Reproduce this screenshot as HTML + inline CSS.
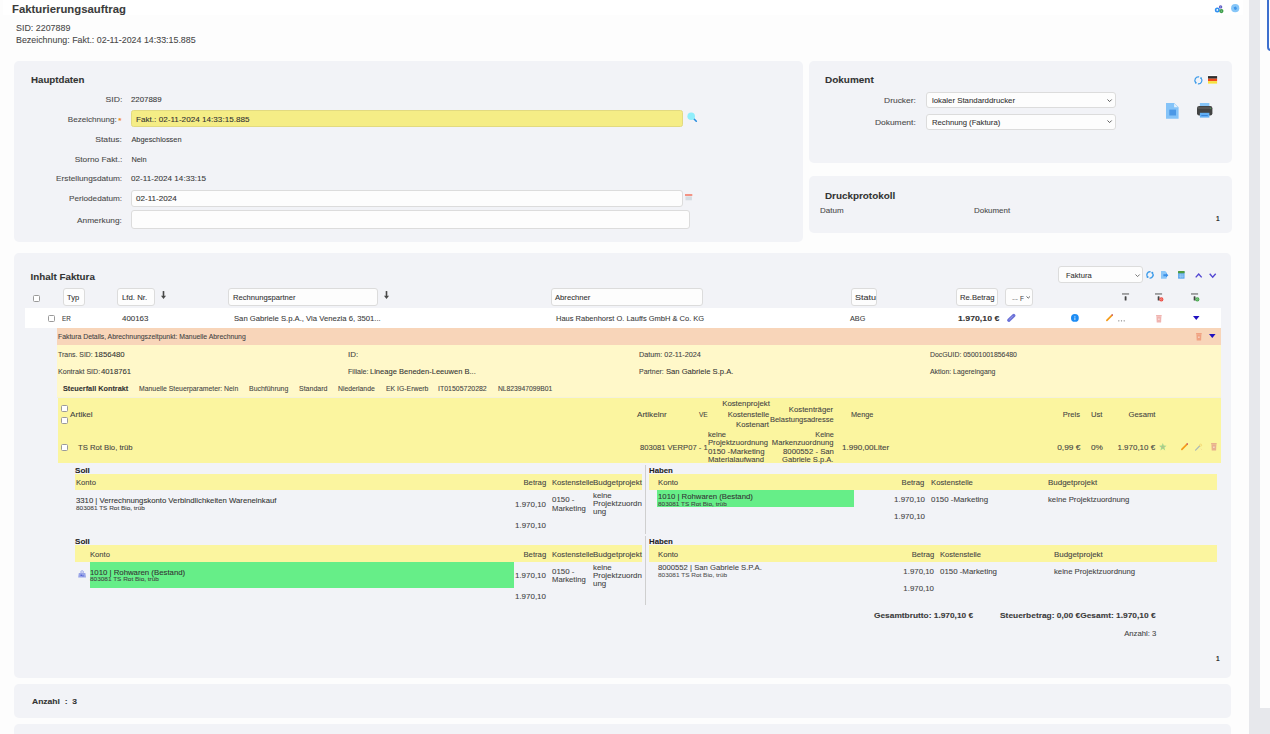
<!DOCTYPE html>
<html><head><meta charset="utf-8"><title>Fakturierungsauftrag</title>
<style>
html,body{margin:0;padding:0;}
body{width:1270px;height:734px;overflow:hidden;position:relative;background:#fdfdfd;font-family:"Liberation Sans",sans-serif;}
body>div,body>span,body>svg{position:absolute;}
span{white-space:pre;-webkit-text-stroke:0.08px currentColor;}
svg{overflow:visible}
</style></head><body>
<div style="left:3px;top:0px;width:1240px;height:15px;background:#fff"></div>
<div style="left:1249px;top:0px;width:11px;height:734px;background:#e7e8ec"></div>
<div style="left:1260px;top:0px;width:10px;height:708px;background:#fdfdfd"></div>
<div style="left:1260px;top:708px;width:10px;height:26px;background:#e7e8ec"></div>
<div style="left:1266.6px;top:-10px;width:30px;height:61px;border:2.2px solid #3d6fce;border-radius:4px;box-sizing:border-box"></div>
<div style="left:14.3px;top:60.8px;width:788.7px;height:180.9px;background:#f2f3f7;border-radius:5px"></div>
<div style="left:808.5px;top:60.6px;width:423.2px;height:102.3px;background:#f2f3f7;border-radius:5px"></div>
<div style="left:808.5px;top:176px;width:423.2px;height:57px;background:#f2f3f7;border-radius:5px"></div>
<div style="left:14.3px;top:253.1px;width:1217.2px;height:425.1px;background:#f2f3f7;border-radius:5px"></div>
<div style="left:14.3px;top:684.2px;width:1217.2px;height:34.1px;background:#f2f3f7;border-radius:5px"></div>
<div style="left:14.3px;top:723.8px;width:1217.2px;height:36.2px;background:#f2f3f7;border-radius:5px"></div>
<div style="left:131.2px;top:110.4px;width:551.4px;height:16.5px;background:#f5ed86;border:1px solid #e2da80;border-radius:2.5px;box-sizing:border-box"></div>
<div style="left:131.2px;top:189.5px;width:551.4px;height:17.1px;background:#fdfdfd;border:1px solid #dcdcdc;border-radius:3px;box-sizing:border-box"></div>
<div style="left:131.2px;top:210.3px;width:559.2px;height:18.3px;background:#fdfdfd;border:1px solid #dcdcdc;border-radius:3px;box-sizing:border-box"></div>
<div style="left:925.5px;top:91.5px;width:190.3px;height:16.9px;background:#fdfdfd;border:1px solid #dcdcdc;border-radius:3px;box-sizing:border-box"></div>
<div style="left:925.5px;top:113.6px;width:190.3px;height:16.2px;background:#fdfdfd;border:1px solid #dcdcdc;border-radius:3px;box-sizing:border-box"></div>
<div style="left:62.7px;top:288.4px;width:22.2px;height:17.3px;background:#fdfdfd;border:1px solid #dcdcdc;border-radius:3px;box-sizing:border-box"></div>
<div style="left:116.9px;top:288.4px;width:37.9px;height:17.3px;background:#fdfdfd;border:1px solid #dcdcdc;border-radius:3px;box-sizing:border-box"></div>
<div style="left:228.3px;top:288.4px;width:149.9px;height:17.3px;background:#fdfdfd;border:1px solid #dcdcdc;border-radius:3px;box-sizing:border-box"></div>
<div style="left:550.5px;top:288.4px;width:152.3px;height:17.3px;background:#fdfdfd;border:1px solid #dcdcdc;border-radius:3px;box-sizing:border-box"></div>
<div style="left:850.5px;top:288.4px;width:26.2px;height:17.3px;background:#fdfdfd;border:1px solid #dcdcdc;border-radius:3px;box-sizing:border-box"></div>
<div style="left:955.7px;top:288.4px;width:42.0px;height:17.3px;background:#fdfdfd;border:1px solid #dcdcdc;border-radius:3px;box-sizing:border-box"></div>
<div style="left:1004.6px;top:288.4px;width:28.0px;height:17.3px;background:#fdfdfd;border:1px solid #dcdcdc;border-radius:3px;box-sizing:border-box"></div>
<div style="left:1058.4px;top:266.2px;width:85.1px;height:17.3px;background:#fdfdfd;border:1px solid #dcdcdc;border-radius:3px;box-sizing:border-box"></div>
<div style="left:25.2px;top:307.9px;width:1195.9px;height:20.0px;background:#ffffff"></div>
<div style="left:57px;top:328.1px;width:1164.1px;height:16.8px;background:#f8d5b9"></div>
<div style="left:57px;top:344.9px;width:1164.1px;height:53.1px;background:#fff8c9"></div>
<div style="left:57px;top:396.9px;width:1164.1px;height:1.0px;background:#f4f1dc"></div>
<div style="left:57.5px;top:398px;width:1163.6px;height:65.4px;background:#fbf59f"></div>
<div style="left:75.1px;top:473.6px;width:567.4px;height:16.6px;background:#fbf59f"></div>
<div style="left:648.8px;top:473.6px;width:567.9px;height:16.6px;background:#fbf59f"></div>
<div style="left:644.5px;top:464.7px;width:1.0px;height:69.0px;background:#cfcfcf"></div>
<div style="left:75.1px;top:545.1px;width:567.4px;height:16.7px;background:#fbf59f"></div>
<div style="left:648.8px;top:545.1px;width:567.9px;height:16.7px;background:#fbf59f"></div>
<div style="left:644.5px;top:536.3px;width:1.0px;height:69.0px;background:#cfcfcf"></div>
<div style="left:657.4px;top:490.3px;width:196.5px;height:17.2px;background:#66ee88"></div>
<div style="left:89.9px;top:562.2px;width:424.4px;height:25.6px;background:#66ee88"></div>
<div style="left:33px;top:294.5px;width:7.3px;height:7.5px;background:#fff;border:1px solid #9a9a9a;border-radius:1.5px;box-sizing:border-box"></div>
<div style="left:48px;top:315.3px;width:7.2px;height:7.2px;background:#fff;border:1px solid #9a9a9a;border-radius:1.5px;box-sizing:border-box"></div>
<div style="left:60.6px;top:405.3px;width:7.0px;height:6.6px;background:#fff;border:1px solid #9a9a9a;border-radius:1.5px;box-sizing:border-box"></div>
<div style="left:60.6px;top:417.1px;width:7.0px;height:6.7px;background:#fff;border:1px solid #9a9a9a;border-radius:1.5px;box-sizing:border-box"></div>
<div style="left:60.6px;top:444.3px;width:7.0px;height:6.3px;background:#fff;border:1px solid #9a9a9a;border-radius:1.5px;box-sizing:border-box"></div>
<span style="left:118.3px;top:116.9px;font-size:8px;line-height:8px;color:#f08a24;font-weight:700">*</span>
<svg style="left:1107.2px;top:98.5px" width="5.2" height="3.1" viewBox="0 0 5.2 3.1"><path d="M0.5 0.5 L2.6 2.6 L4.7 0.5" fill="none" stroke="#555" stroke-width="0.95"/></svg>
<svg style="left:1107.2px;top:120.1px" width="5.2" height="3.1" viewBox="0 0 5.2 3.1"><path d="M0.5 0.5 L2.6 2.6 L4.7 0.5" fill="none" stroke="#555" stroke-width="0.95"/></svg>
<svg style="left:1135.2px;top:273.6px" width="5.2" height="3.1" viewBox="0 0 5.2 3.1"><path d="M0.5 0.5 L2.6 2.6 L4.7 0.5" fill="none" stroke="#666" stroke-width="0.9"/></svg>
<svg style="left:1025.8px;top:296.2px" width="4.5" height="2.6" viewBox="0 0 4.5 2.6"><path d="M0.5 0.5 L2.25 2.1 L4.0 0.5" fill="none" stroke="#666" stroke-width="1.0"/></svg>
<svg style="left:1214px;top:3.5px" width="11" height="10" viewBox="0 0 11 10"><circle cx="3.3" cy="5.9" r="2.5" fill="#2f90f2"/><circle cx="3.3" cy="5.9" r="0.9" fill="#fff"/><circle cx="6.6" cy="2.9" r="1.7" fill="#5c5cc4"/><circle cx="6.6" cy="2.9" r="0.6" fill="#a9a9e6"/><circle cx="7.4" cy="7.1" r="2.1" fill="#3d9d4a"/><circle cx="7.4" cy="7.1" r="0.7" fill="#8fd39a"/></svg>
<svg style="left:1231.4px;top:3.8px" width="8.5" height="8.5" viewBox="0 0 8.5 8.5"><circle cx="4.2" cy="4.2" r="4.1" fill="#86c6f8"/><path d="M2.6 3.2 L4.8 2.6 L6 4.2 L5 6 L3.4 5.6 Z" fill="#3f96ea"/></svg>
<svg style="left:686.8px;top:111.9px" width="10.5" height="10.5" viewBox="0 0 10.5 10.5"><path d="M6.3 6.2 L9.3 9.2" stroke="#2a8ee0" stroke-width="1.6" stroke-linecap="round"/><circle cx="4.2" cy="4.2" r="3.8" fill="#90eefb"/></svg>
<svg style="left:684.8px;top:194.4px" width="7.3" height="6.5" viewBox="0 0 7.3 6.5"><rect x="0" y="0" width="7.3" height="2" fill="#f39384"/><rect x="0.5" y="2.4" width="6.4" height="3.9" fill="#d5dce2"/></svg>
<svg style="left:1194px;top:75.6px" width="8.8" height="8.8" viewBox="0 0 8.8 8.8"><path d="M5.13 0.96 A3.52 3.52 0 0 0 1.78 6.76" fill="none" stroke="#3d9be9" stroke-width="1.2"/><path d="M7.02 2.04 A3.52 3.52 0 0 1 3.91 7.89" fill="none" stroke="#3d9be9" stroke-width="1.2"/><circle cx="7.02" cy="2.04" r="0.90" fill="#3d9be9"/><circle cx="1.78" cy="6.76" r="0.90" fill="#3d9be9"/></svg>
<svg style="left:1207.9px;top:75.2px" width="9.1" height="8.8" viewBox="0 0 9.1 8.8"><rect width="9.1" height="0.8" y="0" fill="#ffffff"/><rect width="9.1" height="2.6" y="1.1" fill="#2e2e2e"/><rect width="9.1" height="2.5" y="3.7" fill="#f24a1c"/><rect width="9.1" height="2.4" y="6.2" fill="#f7e23a"/></svg>
<svg style="left:1166.1px;top:102.5px" width="12.6" height="15.8" viewBox="0 0 12.6 15.8"><path d="M0 0 H8.1 L12.6 4.2 V15.8 H0 Z" fill="#85c3f8"/><path d="M8.1 0.6 V4.2 H11.9 Z" fill="#e3f1fd"/><rect x="3.3" y="6.6" width="6.7" height="5.9" fill="#4c98e6"/></svg>
<svg style="left:1197px;top:103.3px" width="15.4" height="14.6" viewBox="0 0 15.4 14.6"><rect x="2.9" y="0" width="9.5" height="3.8" fill="#86c4f8"/><rect x="0" y="3" width="15.4" height="9.5" rx="2.2" fill="#434343"/><rect x="0.8" y="4.2" width="13.8" height="1.6" fill="#5a5a5a"/><circle cx="13.5" cy="5.5" r="0.6" fill="#3fa34a"/><rect x="2.9" y="9.8" width="9.5" height="4.8" fill="#62aff4"/><rect x="4.3" y="12" width="6.5" height="1" fill="#3c84d8"/></svg>
<svg style="left:1146.3px;top:271px" width="7.9" height="7.9" viewBox="0 0 7.9 7.9"><path d="M4.61 0.86 A3.16 3.16 0 0 0 1.60 6.06" fill="none" stroke="#3d9be9" stroke-width="1.35"/><path d="M6.30 1.84 A3.16 3.16 0 0 1 3.51 7.08" fill="none" stroke="#3d9be9" stroke-width="1.35"/><circle cx="6.30" cy="1.84" r="1.01" fill="#3d9be9"/><circle cx="1.60" cy="6.06" r="1.01" fill="#3d9be9"/></svg>
<svg style="left:1161.4px;top:271.1px" width="7.4" height="7.8" viewBox="0 0 7.4 7.8"><path d="M0 0 H4.2 L5.6 1.4 V7.8 H0 Z" fill="#8ac6f8"/><path d="M2.4 3.3 H5 V2 L7.4 4.3 L5 6.6 V5.3 H2.4 Z" fill="#3a8fe8"/></svg>
<svg style="left:1178.1px;top:271.1px" width="6.6" height="7.8" viewBox="0 0 6.6 7.8"><rect width="6.6" height="7.8" rx="0.9" fill="#66acee"/><rect x="0" y="0" width="6.6" height="2.3" rx="0.6" fill="#4f9b3e"/><path d="M0.8 4 H5.8 M0.8 5.6 H5.8 M2.5 2.8 V7.2 M4.1 2.8 V7.2" stroke="#a8d2f6" stroke-width="0.5"/></svg>
<svg style="left:1194.8px;top:272.6px" width="7.4" height="5" viewBox="0 0 7.4 5"><path d="M0.7 4.4 L3.7 1 L6.7 4.4" fill="none" stroke="#5448d2" stroke-width="1.4"/></svg>
<svg style="left:1208.9px;top:272.6px" width="7.4" height="5" viewBox="0 0 7.4 5"><path d="M0.7 0.8 L3.7 4.1 L6.7 0.8" fill="none" stroke="#5448d2" stroke-width="1.4"/></svg>
<svg style="left:1122.1px;top:293px" width="8.6" height="8.8" viewBox="0 0 8.6 8.8"><rect x="0" y="0.3" width="7.1" height="1.3" fill="#7a7a7a"/><rect x="2.7" y="3.2" width="1.8" height="4.3" rx="0.5" fill="#444"/></svg>
<svg style="left:1155.4px;top:293px" width="8.6" height="8.8" viewBox="0 0 8.6 8.8"><rect x="0" y="0.3" width="7.1" height="1.3" fill="#7a7a7a"/><rect x="2.7" y="3.2" width="1.8" height="4.3" rx="0.5" fill="#444"/><circle cx="6.3" cy="6.4" r="2.1" fill="#ec4a40"/><circle cx="6.3" cy="6.4" r="0.8" fill="none" stroke="#fff" stroke-width="0.5" opacity="0.6"/></svg>
<svg style="left:1190.5px;top:293px" width="8.6" height="8.8" viewBox="0 0 8.6 8.8"><rect x="0" y="0.3" width="7.1" height="1.3" fill="#7a7a7a"/><rect x="2.7" y="3.2" width="1.8" height="4.3" rx="0.5" fill="#444"/><circle cx="6.3" cy="6.4" r="2.1" fill="#45a84c"/><circle cx="6.3" cy="6.4" r="0.8" fill="none" stroke="#fff" stroke-width="0.5" opacity="0.6"/></svg>
<svg style="left:160.9px;top:290.8px" width="5" height="8" viewBox="0 0 5 8"><rect x="1.7" y="0" width="1.6" height="5.2" rx="0.6" fill="#484848"/><path d="M0 4.8 H5 L2.5 8 Z" fill="#484848"/></svg>
<svg style="left:384.3px;top:290.8px" width="5" height="8" viewBox="0 0 5 8"><rect x="1.7" y="0" width="1.6" height="5.2" rx="0.6" fill="#484848"/><path d="M0 4.8 H5 L2.5 8 Z" fill="#484848"/></svg>
<svg style="left:1007.4px;top:313.8px" width="8.6" height="8" viewBox="0 0 8.6 8"><path d="M1.8 6.2 L6.8 1.6" stroke="#6c72d8" stroke-width="3.4" stroke-linecap="round"/><path d="M2.6 5.2 L5.6 2.4" stroke="#a6aaea" stroke-width="0.7" stroke-linecap="round"/></svg>
<svg style="left:1071.3px;top:314px" width="7.8" height="7.8" viewBox="0 0 7.8 7.8"><circle cx="3.9" cy="3.9" r="3.9" fill="#1c8cf4"/><rect x="3.45" y="3.4" width="0.9" height="2.7" fill="#d9ecff"/><rect x="3.45" y="1.9" width="0.9" height="0.9" fill="#d9ecff"/></svg>
<svg style="left:1106.2px;top:314.3px" width="7.2" height="7.2" viewBox="0 0 7.2 7.2"><path d="M0.9 6.3 L6.1 1.1" stroke="#f59b18" stroke-width="1.7" stroke-linecap="round"/><circle cx="6.3" cy="0.9" r="0.75" fill="#b84a8a"/></svg>
<svg style="left:1117.8px;top:319.8px" width="7" height="1.6" viewBox="0 0 7 1.6"><circle cx="0.8" cy="0.8" r="0.65" fill="#777"/><circle cx="3.5" cy="0.8" r="0.65" fill="#777"/><circle cx="6.2" cy="0.8" r="0.65" fill="#777"/></svg>
<svg style="left:1156.2px;top:314.5px" width="5.8" height="7.4" viewBox="0 0 5.8 7.4"><rect x="0" y="0" width="5.8" height="1.3" rx="0.4" fill="#f0b4b0"/><path d="M0.4 1.3 H5.4 L5.1 7.4 H0.7 Z" fill="#f0b4b0"/><rect x="2.3" y="3.6" width="1.2" height="1.2" fill="#fff" opacity="0.85"/></svg>
<svg style="left:1193.1px;top:316px" width="6.5" height="3.9" viewBox="0 0 6.5 3.9"><path d="M0 0 H6.5 L3.25 3.9 Z" fill="#2010c0"/></svg>
<svg style="left:1195.7px;top:333.2px" width="5.8" height="7.4" viewBox="0 0 5.8 7.4"><rect x="0" y="0" width="5.8" height="1.3" rx="0.4" fill="#f0a282"/><path d="M0.4 1.3 H5.4 L5.1 7.4 H0.7 Z" fill="#f0a282"/><rect x="2.3" y="3.6" width="1.2" height="1.2" fill="#fff" opacity="0.85"/></svg>
<svg style="left:1209.2px;top:334.4px" width="6.6" height="3.9" viewBox="0 0 6.6 3.9"><path d="M0 0 H6.6 L3.3 3.9 Z" fill="#2010c0"/></svg>
<svg style="left:1158.9px;top:443.1px" width="7.6" height="7.4" viewBox="0 0 7.6 7.4"><path d="M3.8 0 L4.8 2.6 L7.6 2.7 L5.4 4.5 L6.2 7.4 L3.8 5.8 L1.4 7.4 L2.2 4.5 L0 2.7 L2.8 2.6 Z" fill="#a6d68c"/><circle cx="3.8" cy="4" r="1" fill="#c4b08a" opacity="0.6"/></svg>
<svg style="left:1180.5px;top:443.1px" width="7.2" height="7.2" viewBox="0 0 7.2 7.2"><path d="M0.9 6.3 L6.1 1.1" stroke="#f59b18" stroke-width="1.7" stroke-linecap="round"/><circle cx="6.3" cy="0.9" r="0.75" fill="#b84a8a"/></svg>
<svg style="left:1194.9px;top:444px" width="7" height="6.6" viewBox="0 0 7 6.6"><path d="M0.6 6.1 L4.6 2" stroke="#a9b8b8" stroke-width="1.2" stroke-linecap="round"/><circle cx="5.6" cy="1.2" r="1.1" fill="none" stroke="#f3d36a" stroke-width="0.7"/><path d="M5.8 4.8 L6.8 5.8" stroke="#f3c98a" stroke-width="0.6"/></svg>
<svg style="left:1210.9px;top:443px" width="5.8" height="7.4" viewBox="0 0 5.8 7.4"><rect x="0" y="0" width="5.8" height="1.3" rx="0.4" fill="#e8b08e"/><path d="M0.4 1.3 H5.4 L5.1 7.4 H0.7 Z" fill="#e8b08e"/><rect x="2.3" y="3.6" width="1.2" height="1.2" fill="#fff" opacity="0.85"/></svg>
<svg style="left:78.4px;top:570.4px" width="8.2" height="7.8" viewBox="0 0 8.2 7.8"><circle cx="4.1" cy="2" r="1.3" fill="none" stroke="#95a0e6" stroke-width="0.9"/><path d="M0.8 2.9 H7.4 L8 7.6 H0.2 Z" fill="#9aa5e8"/><circle cx="3.2" cy="5.2" r="0.7" fill="#3b4ad0"/><circle cx="5" cy="5.8" r="0.6" fill="#3b4ad0"/></svg>
<span style="top:4.15px;font-size:11.4px;line-height:11.4px;color:#3c3c3c;font-weight:700;left:11.74px;transform:scaleX(0.994);transform-origin:0 50%;">Fakturierungsauftrag</span>
<span style="top:24.09px;font-size:8.4px;line-height:8.4px;color:#484848;left:15.66px;transform:scaleX(1.062);transform-origin:0 50%;">SID: 2207889</span>
<span style="top:36.49px;font-size:8.4px;line-height:8.4px;color:#484848;left:15.66px;transform:scaleX(1.058);transform-origin:0 50%;">Bezeichnung: Fakt.: 02-11-2024 14:33:15.885</span>
<span style="top:74.80px;font-size:9.8px;line-height:9.8px;color:#333;font-weight:700;left:31.11px;transform:scaleX(0.992);transform-origin:0 50%;">Hauptdaten</span>
<span style="top:96.34px;font-size:7.4px;line-height:7.4px;color:#4a4a4a;left:107.62px;transform:scaleX(1.168);transform-origin:100% 50%;">SID:</span>
<span style="top:116.34px;font-size:7.4px;line-height:7.4px;color:#4a4a4a;left:72.40px;transform:scaleX(1.095);transform-origin:100% 50%;">Bezeichnung:</span>
<span style="top:136.04px;font-size:7.4px;line-height:7.4px;color:#4a4a4a;left:98.98px;transform:scaleX(1.164);transform-origin:100% 50%;">Status:</span>
<span style="top:155.74px;font-size:7.4px;line-height:7.4px;color:#4a4a4a;left:79.69px;transform:scaleX(1.127);transform-origin:100% 50%;">Storno Fakt.:</span>
<span style="top:175.24px;font-size:7.4px;line-height:7.4px;color:#4a4a4a;left:62.84px;transform:scaleX(1.118);transform-origin:100% 50%;">Erstellungsdatum:</span>
<span style="top:195.14px;font-size:7.4px;line-height:7.4px;color:#4a4a4a;left:73.92px;transform:scaleX(1.103);transform-origin:100% 50%;">Periodedatum:</span>
<span style="top:216.94px;font-size:7.4px;line-height:7.4px;color:#4a4a4a;left:82.14px;transform:scaleX(1.126);transform-origin:100% 50%;">Anmerkung:</span>
<span style="top:96.34px;font-size:7.4px;line-height:7.4px;color:#3a3a3a;left:131.40px;transform:scaleX(1.064);transform-origin:0 50%;">2207889</span>
<span style="top:116.34px;font-size:7.4px;line-height:7.4px;color:#333;left:136.00px;transform:scaleX(1.103);transform-origin:0 50%;">Fakt.: 02-11-2024 14:33:15.885</span>
<span style="top:136.04px;font-size:7.4px;line-height:7.4px;color:#3a3a3a;left:131.40px;">Abgeschlossen</span>
<span style="top:155.74px;font-size:7.4px;line-height:7.4px;color:#3a3a3a;left:131.40px;">Nein</span>
<span style="top:175.24px;font-size:7.4px;line-height:7.4px;color:#3a3a3a;left:131.40px;transform:scaleX(1.102);transform-origin:0 50%;">02-11-2024 14:33:15</span>
<span style="top:195.14px;font-size:7.4px;line-height:7.4px;color:#333;left:136.20px;transform:scaleX(1.096);transform-origin:0 50%;">02-11-2024</span>
<span style="top:75.00px;font-size:9.8px;line-height:9.8px;color:#333;font-weight:700;left:824.61px;transform:scaleX(1.017);transform-origin:0 50%;">Dokument</span>
<span style="top:97.34px;font-size:7.4px;line-height:7.4px;color:#4a4a4a;left:888.26px;transform:scaleX(1.141);transform-origin:100% 50%;">Drucker:</span>
<span style="top:118.64px;font-size:7.4px;line-height:7.4px;color:#4a4a4a;left:880.45px;transform:scaleX(1.143);transform-origin:100% 50%;">Dokument:</span>
<span style="top:97.34px;font-size:7.4px;line-height:7.4px;color:#333;left:932.30px;transform:scaleX(1.058);transform-origin:0 50%;">lokaler Standarddrucker</span>
<span style="top:118.64px;font-size:7.4px;line-height:7.4px;color:#333;left:932.30px;transform:scaleX(1.038);transform-origin:0 50%;">Rechnung (Faktura)</span>
<span style="top:190.80px;font-size:9.8px;line-height:9.8px;color:#333;font-weight:700;left:824.61px;transform:scaleX(1.007);transform-origin:0 50%;">Druckprotokoll</span>
<span style="top:206.51px;font-size:7.2px;line-height:7.2px;color:#4a4a4a;left:820.11px;transform:scaleX(1.112);transform-origin:0 50%;">Datum</span>
<span style="top:206.51px;font-size:7.2px;line-height:7.2px;color:#4a4a4a;left:973.71px;transform:scaleX(1.103);transform-origin:0 50%;">Dokument</span>
<span style="top:216.10px;font-size:6.5px;line-height:6.5px;color:#333;font-weight:700;left:1215.88px;">1</span>
<span style="top:272.40px;font-size:9.8px;line-height:9.8px;color:#333;font-weight:700;left:30.61px;">Inhalt Faktura</span>
<span style="top:293.71px;font-size:7.2px;line-height:7.2px;color:#333;left:67.41px;transform:scaleX(1.044);transform-origin:0 50%;">Typ</span>
<span style="top:293.71px;font-size:7.2px;line-height:7.2px;color:#333;left:121.71px;transform:scaleX(1.084);transform-origin:0 50%;">Lfd. Nr.</span>
<span style="top:293.71px;font-size:7.2px;line-height:7.2px;color:#333;left:233.11px;transform:scaleX(1.057);transform-origin:0 50%;">Rechnungspartner</span>
<span style="top:293.71px;font-size:7.2px;line-height:7.2px;color:#333;left:555.11px;transform:scaleX(1.065);transform-origin:0 50%;">Abrechner</span>
<span style="top:293.71px;font-size:7.2px;line-height:7.2px;color:#333;left:855.41px;transform:scaleX(1.251);transform-origin:0 50%;">Statu</span>
<span style="top:293.71px;font-size:7.2px;line-height:7.2px;color:#333;left:960.21px;transform:scaleX(1.063);transform-origin:0 50%;">Re.Betrag</span>
<span style="top:295.82px;font-size:6px;line-height:6px;color:#555;left:1012.06px;transform:scaleX(1.477);transform-origin:0 50%;">--</span>
<span style="top:294.64px;font-size:7.4px;line-height:7.4px;color:#444;left:1020.20px;transform:scaleX(0.867);transform-origin:0 50%;">F</span>
<span style="top:272.14px;font-size:7.4px;line-height:7.4px;color:#333;left:1065.70px;transform:scaleX(1.022);transform-origin:0 50%;">Faktura</span>
<span style="top:315.21px;font-size:7.2px;line-height:7.2px;color:#3a3a3a;left:62.41px;transform:scaleX(0.881);transform-origin:0 50%;">ER</span>
<span style="top:315.21px;font-size:7.2px;line-height:7.2px;color:#3a3a3a;left:122.21px;transform:scaleX(1.102);transform-origin:0 50%;">400163</span>
<span style="top:315.21px;font-size:7.2px;line-height:7.2px;color:#3a3a3a;left:233.61px;transform:scaleX(1.068);transform-origin:0 50%;">San Gabriele S.p.A., Via Venezia 6, 3501...</span>
<span style="top:315.21px;font-size:7.2px;line-height:7.2px;color:#3a3a3a;left:555.71px;transform:scaleX(1.043);transform-origin:0 50%;">Haus Rabenhorst O. Lauffs GmbH &amp; Co. KG</span>
<span style="top:315.21px;font-size:7.2px;line-height:7.2px;color:#3a3a3a;left:850.21px;transform:scaleX(1.006);transform-origin:0 50%;">ABG</span>
<span style="top:315.04px;font-size:7.4px;line-height:7.4px;color:#333;font-weight:700;left:958.10px;transform:scaleX(1.182);transform-origin:0 50%;">1.970,10 €</span>
<span style="top:334.01px;font-size:6.6px;line-height:6.6px;color:#444;left:57.54px;transform:scaleX(1.041);transform-origin:0 50%;">Faktura Details, Abrechnungszeitpunkt: Manuelle Abrechnung</span>
<span style="top:351.50px;font-size:6.5px;line-height:6.5px;color:#444;left:57.54px;transform:scaleX(1.065);transform-origin:0 50%;">Trans. SID:</span>
<span style="top:351.00px;font-size:7.8px;line-height:7.8px;color:#333;left:94.29px;">1856480</span>
<span style="top:368.80px;font-size:6.5px;line-height:6.5px;color:#444;left:57.54px;transform:scaleX(1.091);transform-origin:0 50%;">Kontrakt SID:</span>
<span style="top:368.30px;font-size:7.8px;line-height:7.8px;color:#333;left:101.49px;transform:scaleX(0.992);transform-origin:0 50%;">4018761</span>
<span style="top:351.50px;font-size:6.5px;line-height:6.5px;color:#444;left:348.44px;transform:scaleX(1.219);transform-origin:0 50%;">ID:</span>
<span style="top:368.80px;font-size:6.5px;line-height:6.5px;color:#444;left:348.44px;transform:scaleX(1.089);transform-origin:0 50%;">Filiale:</span>
<span style="top:368.30px;font-size:7.8px;line-height:7.8px;color:#333;left:370.49px;transform:scaleX(0.968);transform-origin:0 50%;">Lineage Beneden-Leeuwen B...</span>
<span style="top:351.50px;font-size:6.5px;line-height:6.5px;color:#444;left:639.34px;transform:scaleX(1.114);transform-origin:0 50%;">Datum: 02-11-2024</span>
<span style="top:368.80px;font-size:6.5px;line-height:6.5px;color:#444;left:639.34px;transform:scaleX(1.071);transform-origin:0 50%;">Partner:</span>
<span style="top:368.30px;font-size:7.8px;line-height:7.8px;color:#333;left:666.19px;transform:scaleX(0.977);transform-origin:0 50%;">San Gabriele S.p.A.</span>
<span style="top:351.50px;font-size:6.5px;line-height:6.5px;color:#444;left:930.44px;transform:scaleX(1.059);transform-origin:0 50%;">DocGUID: 05001001856480</span>
<span style="top:368.80px;font-size:6.5px;line-height:6.5px;color:#444;left:930.44px;transform:scaleX(1.065);transform-origin:0 50%;">Aktion: Lagereingang</span>
<span style="top:385.88px;font-size:6.4px;line-height:6.4px;color:#333;font-weight:700;left:63.14px;transform:scaleX(1.140);transform-origin:0 50%;">Steuerfall Kontrakt</span>
<span style="top:385.80px;font-size:6.5px;line-height:6.5px;color:#444;left:139.04px;transform:scaleX(1.056);transform-origin:0 50%;">Manuelle Steuerparameter: Nein</span>
<span style="top:385.80px;font-size:6.5px;line-height:6.5px;color:#444;left:249.04px;transform:scaleX(1.067);transform-origin:0 50%;">Buchführung</span>
<span style="top:385.80px;font-size:6.5px;line-height:6.5px;color:#444;left:298.74px;transform:scaleX(1.078);transform-origin:0 50%;">Standard</span>
<span style="top:385.80px;font-size:6.5px;line-height:6.5px;color:#444;left:338.14px;transform:scaleX(1.048);transform-origin:0 50%;">Niederlande</span>
<span style="top:385.80px;font-size:6.5px;line-height:6.5px;color:#444;left:385.54px;transform:scaleX(1.056);transform-origin:0 50%;">EK IG-Erwerb</span>
<span style="top:385.80px;font-size:6.5px;line-height:6.5px;color:#444;left:438.04px;transform:scaleX(1.070);transform-origin:0 50%;">IT01505720282</span>
<span style="top:385.80px;font-size:6.5px;line-height:6.5px;color:#444;left:498.04px;transform:scaleX(1.037);transform-origin:0 50%;">NL823947099B01</span>
<span style="top:410.67px;font-size:7.0px;line-height:7.0px;color:#444;left:69.72px;transform:scaleX(1.164);transform-origin:0 50%;">Artikel</span>
<span style="top:443.97px;font-size:7.0px;line-height:7.0px;color:#444;left:77.82px;transform:scaleX(1.097);transform-origin:0 50%;">TS Rot Bio, trüb</span>
<span style="top:410.77px;font-size:7.0px;line-height:7.0px;color:#444;left:636.72px;transform:scaleX(1.154);transform-origin:0 50%;">Artikelnr</span>
<span style="top:410.77px;font-size:7.0px;line-height:7.0px;color:#444;left:698.52px;transform:scaleX(0.934);transform-origin:0 50%;">VE</span>
<span style="top:400.47px;font-size:7.0px;line-height:7.0px;color:#444;left:726.59px;transform:scaleX(1.112);transform-origin:100% 50%;">Kostenprojekt</span>
<span style="top:410.67px;font-size:7.0px;line-height:7.0px;color:#444;left:731.26px;transform:scaleX(1.088);transform-origin:100% 50%;">Kostenstelle</span>
<span style="top:420.97px;font-size:7.0px;line-height:7.0px;color:#444;left:739.43px;transform:scaleX(1.098);transform-origin:100% 50%;">Kostenart</span>
<span style="top:406.07px;font-size:7.0px;line-height:7.0px;color:#444;left:793.41px;transform:scaleX(1.103);transform-origin:100% 50%;">Kostenträger</span>
<span style="top:415.87px;font-size:7.0px;line-height:7.0px;color:#444;left:773.95px;transform:scaleX(1.068);transform-origin:100% 50%;">Belastungsadresse</span>
<span style="top:410.77px;font-size:7.0px;line-height:7.0px;color:#444;left:850.72px;transform:scaleX(1.046);transform-origin:0 50%;">Menge</span>
<span style="top:410.97px;font-size:7.0px;line-height:7.0px;color:#444;left:1064.25px;transform:scaleX(1.078);transform-origin:100% 50%;">Preis</span>
<span style="top:410.97px;font-size:7.0px;line-height:7.0px;color:#444;left:1091.42px;transform:scaleX(1.087);transform-origin:0 50%;">Ust</span>
<span style="top:410.97px;font-size:7.0px;line-height:7.0px;color:#444;left:1130.78px;transform:scaleX(1.098);transform-origin:100% 50%;">Gesamt</span>
<span style="top:443.87px;font-size:7.0px;line-height:7.0px;color:#444;left:639.72px;transform:scaleX(1.086);transform-origin:0 50%;">803081 VERP07 - 1</span>
<span style="top:430.67px;font-size:7.0px;line-height:7.0px;color:#444;left:708.12px;transform:scaleX(1.076);transform-origin:0 50%;">keine</span>
<span style="top:439.37px;font-size:7.0px;line-height:7.0px;color:#444;left:708.12px;transform:scaleX(1.094);transform-origin:0 50%;">Projektzuordnung</span>
<span style="top:447.57px;font-size:7.0px;line-height:7.0px;color:#444;left:708.12px;transform:scaleX(1.117);transform-origin:0 50%;">0150 -Marketing</span>
<span style="top:455.77px;font-size:7.0px;line-height:7.0px;color:#444;left:708.12px;transform:scaleX(1.092);transform-origin:0 50%;">Materialaufwand</span>
<span style="top:430.67px;font-size:7.0px;line-height:7.0px;color:#444;left:815.59px;transform:scaleX(1.038);transform-origin:100% 50%;">Keine</span>
<span style="top:439.37px;font-size:7.0px;line-height:7.0px;color:#444;left:777.06px;transform:scaleX(1.092);transform-origin:100% 50%;">Markenzuordnung</span>
<span style="top:447.57px;font-size:7.0px;line-height:7.0px;color:#444;left:787.56px;transform:scaleX(1.108);transform-origin:100% 50%;">8000552 - San</span>
<span style="top:455.77px;font-size:7.0px;line-height:7.0px;color:#444;left:786.03px;transform:scaleX(1.083);transform-origin:100% 50%;">Gabriele S.p.A.</span>
<span style="top:443.87px;font-size:7.0px;line-height:7.0px;color:#444;left:842.42px;transform:scaleX(1.158);transform-origin:0 50%;">1.990,00Liter</span>
<span style="top:443.97px;font-size:7.0px;line-height:7.0px;color:#444;left:1060.73px;transform:scaleX(1.195);transform-origin:100% 50%;">0,99 €</span>
<span style="top:443.97px;font-size:7.0px;line-height:7.0px;color:#444;left:1090.92px;transform:scaleX(1.181);transform-origin:0 50%;">0%</span>
<span style="top:443.97px;font-size:7.0px;line-height:7.0px;color:#444;left:1122.21px;transform:scaleX(1.137);transform-origin:100% 50%;">1.970,10 €</span>
<span style="top:466.57px;font-size:7.0px;line-height:7.0px;color:#222;font-weight:700;left:74.82px;transform:scaleX(1.156);transform-origin:0 50%;">Soll</span>
<span style="top:466.97px;font-size:7.0px;line-height:7.0px;color:#222;font-weight:700;left:648.52px;transform:scaleX(1.113);transform-origin:0 50%;">Haben</span>
<span style="top:479.11px;font-size:7.2px;line-height:7.2px;color:#444;left:76.31px;transform:scaleX(1.059);transform-origin:0 50%;">Konto</span>
<span style="top:479.21px;font-size:7.2px;line-height:7.2px;color:#444;left:524.51px;transform:scaleX(1.072);transform-origin:100% 50%;">Betrag</span>
<span style="top:479.21px;font-size:7.2px;line-height:7.2px;color:#444;left:552.01px;transform:scaleX(1.060);transform-origin:0 50%;">Kostenstelle</span>
<span style="top:479.21px;font-size:7.2px;line-height:7.2px;color:#444;left:593.41px;transform:scaleX(1.103);transform-origin:0 50%;">Budgetprojekt</span>
<span style="top:496.67px;font-size:7.6px;line-height:7.6px;color:#333;left:76.30px;transform:scaleX(1.019);transform-origin:0 50%;">3310 | Verrechnungskonto Verbindlichkeiten Wareneinkauf</span>
<span style="top:505.05px;font-size:6.2px;line-height:6.2px;color:#444;left:76.35px;transform:scaleX(1.040);transform-origin:0 50%;">803081 TS Rot Bio, trüb</span>
<span style="top:501.01px;font-size:7.2px;line-height:7.2px;color:#444;left:517.72px;transform:scaleX(1.106);transform-origin:100% 50%;">1.970,10</span>
<span style="top:496.21px;font-size:7.2px;line-height:7.2px;color:#444;left:552.01px;transform:scaleX(1.095);transform-origin:0 50%;">0150 -</span>
<span style="top:504.51px;font-size:7.2px;line-height:7.2px;color:#444;left:552.01px;transform:scaleX(1.068);transform-origin:0 50%;">Marketing</span>
<span style="top:492.31px;font-size:7.2px;line-height:7.2px;color:#444;left:593.41px;transform:scaleX(1.090);transform-origin:0 50%;">keine</span>
<span style="top:500.21px;font-size:7.2px;line-height:7.2px;color:#444;left:593.41px;transform:scaleX(1.103);transform-origin:0 50%;">Projektzuordn</span>
<span style="top:508.01px;font-size:7.2px;line-height:7.2px;color:#444;left:593.41px;transform:scaleX(1.103);transform-origin:0 50%;">ung</span>
<span style="top:522.21px;font-size:7.2px;line-height:7.2px;color:#444;left:517.72px;transform:scaleX(1.106);transform-origin:100% 50%;">1.970,10</span>
<span style="top:479.21px;font-size:7.2px;line-height:7.2px;color:#444;left:657.71px;transform:scaleX(1.070);transform-origin:0 50%;">Konto</span>
<span style="top:492.67px;font-size:7.6px;line-height:7.6px;color:#333;left:658.10px;transform:scaleX(1.023);transform-origin:0 50%;">1010 | Rohwaren (Bestand)</span>
<span style="top:500.75px;font-size:6.2px;line-height:6.2px;color:#444;left:658.15px;transform:scaleX(1.037);transform-origin:0 50%;">803081 TS Rot Bio, trüb</span>
<span style="top:479.21px;font-size:7.2px;line-height:7.2px;color:#444;left:903.41px;transform:scaleX(1.067);transform-origin:100% 50%;">Betrag</span>
<span style="top:479.21px;font-size:7.2px;line-height:7.2px;color:#444;left:930.71px;transform:scaleX(1.070);transform-origin:0 50%;">Kostenstelle</span>
<span style="top:479.21px;font-size:7.2px;line-height:7.2px;color:#444;left:1048.31px;transform:scaleX(1.108);transform-origin:0 50%;">Budgetprojekt</span>
<span style="top:496.41px;font-size:7.2px;line-height:7.2px;color:#444;left:896.62px;transform:scaleX(1.106);transform-origin:100% 50%;">1.970,10</span>
<span style="top:496.41px;font-size:7.2px;line-height:7.2px;color:#444;left:930.71px;transform:scaleX(1.100);transform-origin:0 50%;">0150 -Marketing</span>
<span style="top:496.41px;font-size:7.2px;line-height:7.2px;color:#444;left:1048.31px;transform:scaleX(1.078);transform-origin:0 50%;">keine Projektzuordnung</span>
<span style="top:513.21px;font-size:7.2px;line-height:7.2px;color:#444;left:896.62px;transform:scaleX(1.106);transform-origin:100% 50%;">1.970,10</span>
<span style="top:538.47px;font-size:7.0px;line-height:7.0px;color:#222;font-weight:700;left:74.82px;transform:scaleX(1.156);transform-origin:0 50%;">Soll</span>
<span style="top:538.07px;font-size:7.0px;line-height:7.0px;color:#222;font-weight:700;left:649.02px;transform:scaleX(1.113);transform-origin:0 50%;">Haben</span>
<span style="top:550.51px;font-size:7.2px;line-height:7.2px;color:#444;left:90.31px;transform:scaleX(1.059);transform-origin:0 50%;">Konto</span>
<span style="top:551.01px;font-size:7.2px;line-height:7.2px;color:#444;left:524.61px;transform:scaleX(1.072);transform-origin:100% 50%;">Betrag</span>
<span style="top:551.01px;font-size:7.2px;line-height:7.2px;color:#444;left:552.01px;transform:scaleX(1.060);transform-origin:0 50%;">Kostenstelle</span>
<span style="top:551.01px;font-size:7.2px;line-height:7.2px;color:#444;left:593.41px;transform:scaleX(1.103);transform-origin:0 50%;">Budgetprojekt</span>
<span style="top:568.57px;font-size:7.6px;line-height:7.6px;color:#333;left:90.30px;transform:scaleX(1.026);transform-origin:0 50%;">1010 | Rohwaren (Bestand)</span>
<span style="top:576.35px;font-size:6.2px;line-height:6.2px;color:#444;left:90.35px;transform:scaleX(1.040);transform-origin:0 50%;">803081 TS Rot Bio, trüb</span>
<span style="top:572.21px;font-size:7.2px;line-height:7.2px;color:#444;left:517.82px;transform:scaleX(1.109);transform-origin:100% 50%;">1.970,10</span>
<span style="top:567.81px;font-size:7.2px;line-height:7.2px;color:#444;left:552.01px;transform:scaleX(1.095);transform-origin:0 50%;">0150 -</span>
<span style="top:576.01px;font-size:7.2px;line-height:7.2px;color:#444;left:552.01px;transform:scaleX(1.068);transform-origin:0 50%;">Marketing</span>
<span style="top:563.51px;font-size:7.2px;line-height:7.2px;color:#444;left:593.41px;transform:scaleX(1.090);transform-origin:0 50%;">keine</span>
<span style="top:571.71px;font-size:7.2px;line-height:7.2px;color:#444;left:593.41px;transform:scaleX(1.103);transform-origin:0 50%;">Projektzuordn</span>
<span style="top:579.91px;font-size:7.2px;line-height:7.2px;color:#444;left:593.41px;transform:scaleX(1.103);transform-origin:0 50%;">ung</span>
<span style="top:593.01px;font-size:7.2px;line-height:7.2px;color:#444;left:517.82px;transform:scaleX(1.109);transform-origin:100% 50%;">1.970,10</span>
<span style="top:550.51px;font-size:7.2px;line-height:7.2px;color:#444;left:657.71px;transform:scaleX(1.070);transform-origin:0 50%;">Konto</span>
<span style="top:564.07px;font-size:7.6px;line-height:7.6px;color:#444;left:657.70px;transform:scaleX(1.011);transform-origin:0 50%;">8000552 | San Gabriele S.P.A.</span>
<span style="top:572.05px;font-size:6.2px;line-height:6.2px;color:#555;left:657.75px;transform:scaleX(1.043);transform-origin:0 50%;">803081 TS Rot Bio, trüb</span>
<span style="top:550.71px;font-size:7.2px;line-height:7.2px;color:#444;left:912.51px;transform:scaleX(1.058);transform-origin:100% 50%;">Betrag</span>
<span style="top:550.71px;font-size:7.2px;line-height:7.2px;color:#444;left:940.41px;transform:scaleX(1.045);transform-origin:0 50%;">Kostenstelle</span>
<span style="top:550.71px;font-size:7.2px;line-height:7.2px;color:#444;left:1054.01px;transform:scaleX(1.099);transform-origin:0 50%;">Budgetprojekt</span>
<span style="top:567.61px;font-size:7.2px;line-height:7.2px;color:#444;left:905.72px;transform:scaleX(1.095);transform-origin:100% 50%;">1.970,10</span>
<span style="top:567.61px;font-size:7.2px;line-height:7.2px;color:#444;left:940.41px;transform:scaleX(1.096);transform-origin:0 50%;">0150 -Marketing</span>
<span style="top:567.61px;font-size:7.2px;line-height:7.2px;color:#444;left:1054.01px;transform:scaleX(1.074);transform-origin:0 50%;">keine Projektzuordnung</span>
<span style="top:584.81px;font-size:7.2px;line-height:7.2px;color:#444;left:905.72px;transform:scaleX(1.095);transform-origin:100% 50%;">1.970,10</span>
<span style="top:611.87px;font-size:7.0px;line-height:7.0px;color:#3a3a3a;font-weight:700;left:873.72px;transform:scaleX(1.191);transform-origin:0 50%;">Gesamtbrutto: 1.970,10 €</span>
<span style="top:611.87px;font-size:7.0px;line-height:7.0px;color:#3a3a3a;font-weight:700;left:1000.42px;transform:scaleX(1.198);transform-origin:0 50%;">Steuerbetrag: 0,00 €Gesamt: 1.970,10 €</span>
<span style="top:630.17px;font-size:7.0px;line-height:7.0px;color:#444;left:1126.51px;transform:scaleX(1.097);transform-origin:100% 50%;">Anzahl: 3</span>
<span style="top:656.20px;font-size:6.5px;line-height:6.5px;color:#333;font-weight:700;left:1215.88px;">1</span>
<span style="top:697.87px;font-size:7.6px;line-height:7.6px;color:#333;font-weight:700;left:31.60px;transform:scaleX(1.122);transform-origin:0 50%;">Anzahl  :  3</span>
</body></html>
